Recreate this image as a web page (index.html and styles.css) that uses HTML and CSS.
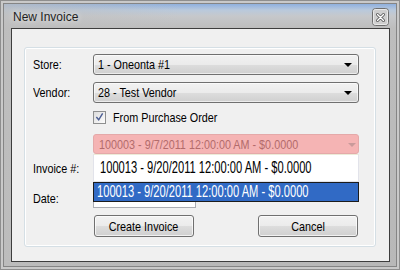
FILE: index.html
```html
<!DOCTYPE html>
<html lang="en">
  <head>
    <meta charset="UTF-8" />
    <title>New Invoice</title>
    <link rel="stylesheet" href="styles.css">
  </head>
  <body>
    <div class="window">
      <div class="titlebar">
        <span class="title">New Invoice</span>
        <span class="close">
          <svg width="17" height="18" viewBox="0 0 17 18">
            <rect x="0.5" y="0.5" width="16" height="17" rx="3" fill="#cfcfcf" stroke="#6f6f6f" />
            <rect x="1.5" y="1.5" width="14" height="15" rx="2" fill="none" stroke="#e9e9e9" />
            <path d="M5.5 6.5 L11.5 12.5 M11.5 6.5 L5.5 12.5" stroke="#555" stroke-width="3" stroke-linecap="round" />
            <path d="M5.5 6.5 L11.5 12.5 M11.5 6.5 L5.5 12.5" stroke="#fff" stroke-width="1.4" stroke-linecap="round" />
          </svg>
        </span>
      </div>
      <div class="client">
        <div class="group">
          <div class="row row-store">
            <span class="label"><span class="txt">Store:</span></span>
            <div class="combo"><span class="txt">1 - Oneonta #1</span><i class="arrow"></i></div>
          </div>
          <div class="row row-vendor">
            <span class="label"><span class="txt">Vendor:</span></span>
            <div class="combo"><span class="txt">28 - Test Vendor</span><i class="arrow"></i></div>
          </div>
          <div class="row row-check">
            <span class="label"></span>
            <span class="checkbox">
              <svg width="14" height="14" viewBox="0 0 14 14">
                <path d="M3 7 L6 10.5 L11 2.5" fill="none" stroke="#4b5d93" stroke-width="1.8" />
              </svg>
            </span>
            <span class="check-text"><span class="txt">From Purchase Order</span></span>
          </div>
          <div class="row row-po">
            <span class="label"></span>
            <div class="combo combo-error"><span class="txt">100003 - 9/7/2011 12:00:00 AM - $0.0000</span><i class="arrow"></i></div>
          </div>
          <div class="row row-invoice">
            <span class="label"><span class="txt">Invoice #:</span></span>
            <div class="dropdown">
              <div class="dropdown-edit">
                <span class="txt tall">100013 - 9/20/2011 12:00:00 AM - $0.0000</span>
                <span class="drop-btn">
                  <svg width="10" height="8" viewBox="0 0 10 8">
                    <path d="M1.5 2 L5 5.5 L8.5 2" fill="none" stroke="#283c6e" stroke-width="2.2" />
                  </svg>
                </span>
              </div>
              <div class="dropdown-list">
                <div class="item selected"><span class="txt tall">100013 - 9/20/2011 12:00:00 AM - $0.0000</span></div>
              </div>
            </div>
          </div>
          <div class="row row-date">
            <span class="label"><span class="txt">Date:</span></span>
            <div class="datefield"></div>
          </div>
          <div class="row row-buttons">
            <span class="label"></span>
            <div class="buttons">
              <button class="button"><span class="txt mid">Create Invoice</span></button>
              <button class="button"><span class="txt mid">Cancel</span></button>
            </div>
          </div>
        </div>
      </div>
    </div>
  </body>
</html>
```

FILE: styles.css
```css
body {
  margin: 0;
  width: 400px;
  height: 270px;
  overflow: hidden;
  background: #b5b5b5;
  font-family: "Liberation Sans", Arial, sans-serif;
  font-size: 13.5px;
  color: #000;
}
/* the dialog font is a narrow face; squeeze Liberation Sans to its width */
.txt {
  display: inline-block;
  white-space: nowrap;
  transform: scaleX(0.8);
  transform-origin: left center;
}
.txt.tall {
  font-size: 17px;
  transform: scaleX(0.655);
}
.txt.mid {
  transform-origin: center;
}
.window {
  width: 400px;
  height: 270px;
  box-sizing: border-box;
  background:
    linear-gradient(to right, rgba(190, 190, 190, 0.7) 0%, rgba(190, 190, 190, 0) 45%),
    linear-gradient(to bottom, #5d86c9 0px, #8fb0de 4px, #b9c9dc 10px, #c6c8cb 16px, #bdbdbd 28px, #b8b8b8 100%);
  box-shadow: inset 0 0 0 1px #8e8e8e, inset 0 0 0 3px #c9c9c9, inset 0 0 0 4px #858585;
  overflow: hidden;
}
.titlebar {
  height: 28px;
  box-sizing: border-box;
  padding: 5px 11px 0 13px;
  display: flex;
  align-items: center;
  justify-content: space-between;
}
.title {
  font-size: 12px;
  color: #1f1f1f;
  text-shadow: 0 0 6px rgba(255, 255, 255, 0.9);
}
.close {
  display: flex;
  margin-top: 1px;
}
.client {
  height: 234px;
  margin: 0 10px 0 11px;
  box-sizing: border-box;
  border: 1px solid #3d3d3d;
  background: #f0f0f0;
  padding: 18px 0 0 12px;
}
.group {
  width: 352px;
  height: 200px;
  box-sizing: border-box;
  border: 1px solid #d5dfe5;
  box-shadow: inset 0 0 0 1px #fff;
  border-radius: 3px;
  padding: 0 8px;
}
.row {
  display: flex;
  align-items: center;
}
.label {
  width: 60px;
  flex: none;
}
.row-store { margin-top: 6px; height: 21px; }
.row-vendor { margin-top: 7px; height: 21px; }
.row-check { margin-top: 7px; height: 14px; }
.row-po { margin-top: 10px; height: 20px; }
.row-invoice { height: 28px; position: relative; z-index: 2; }
.row-date { margin-top: 6px; height: 20px; }
.row-buttons { margin-top: 7px; height: 22px; }

.combo {
  width: 266px;
  height: 100%;
  box-sizing: border-box;
  border: 1px solid #707070;
  border-radius: 3px;
  background: linear-gradient(to bottom, #f2f2f2 0%, #ebebeb 50%, #dddddd 51%, #cfcfcf 100%);
  box-shadow: inset 0 0 0 1px rgba(255, 255, 255, 0.6);
  display: flex;
  align-items: center;
  justify-content: space-between;
  padding: 0 6px 0 4px;
  overflow: hidden;
}
.arrow {
  width: 0;
  height: 0;
  border-left: 4px solid transparent;
  border-right: 4px solid transparent;
  border-top: 4px solid #000;
  margin-top: 1px;
}
.combo-error {
  border-color: #e4a9a9;
  background: #f5b4b4;
  box-shadow: none;
  color: #b36b6b;
  padding-left: 5px;
}
.combo-error .arrow {
  border-top-color: #c99a9a;
}
.checkbox {
  width: 13px;
  height: 13px;
  box-sizing: border-box;
  border: 1px solid #8e8f8f;
  background: linear-gradient(135deg, #dcdcdc, #fdfdfd);
  display: flex;
  align-items: center;
  justify-content: center;
}
.check-text {
  margin-left: 7px;
}
.dropdown {
  width: 266px;
  height: 100%;
  position: relative;
}
.dropdown-edit {
  height: 100%;
  box-sizing: border-box;
  border: 1px solid #e2e3ea;
  border-top-color: #ecebd8;
  background: #fff;
  display: flex;
  align-items: center;
  justify-content: space-between;
  padding: 0 1px 0 6px;
  overflow: hidden;
}
.drop-btn {
  width: 15px;
  height: 22px;
  flex: none;
  box-sizing: border-box;
  border: 1px solid #a7bde0;
  border-radius: 2px;
  background: linear-gradient(to bottom, #e4edf9, #c3d6f1);
  display: flex;
  align-items: center;
  justify-content: center;
}
.dropdown-list {
  position: absolute;
  top: 100%;
  left: 0;
  width: 100%;
  box-sizing: border-box;
  border: 1px solid #1c1c1c;
  background: #fff;
  overflow: hidden;
}
.item {
  height: 18px;
  line-height: 18px;
  padding-left: 3px;
}
.selected {
  background: #316ac5;
  color: #fff;
}
.datefield {
  width: 103px;
  height: 100%;
  box-sizing: border-box;
  border: 1px solid #abadb3;
  background: #fff;
}
.buttons {
  width: 266px;
  display: flex;
  justify-content: space-between;
  padding: 0 1px;
  box-sizing: border-box;
}
.button {
  width: 100px;
  height: 22px;
  font: inherit;
  color: #000;
  border: 1px solid #707070;
  border-radius: 3px;
  background: linear-gradient(to bottom, #f2f2f2 0%, #ebebeb 50%, #dddddd 51%, #cfcfcf 100%);
  box-shadow: inset 0 0 0 1px rgba(255, 255, 255, 0.7);
  padding: 0;
}
```
